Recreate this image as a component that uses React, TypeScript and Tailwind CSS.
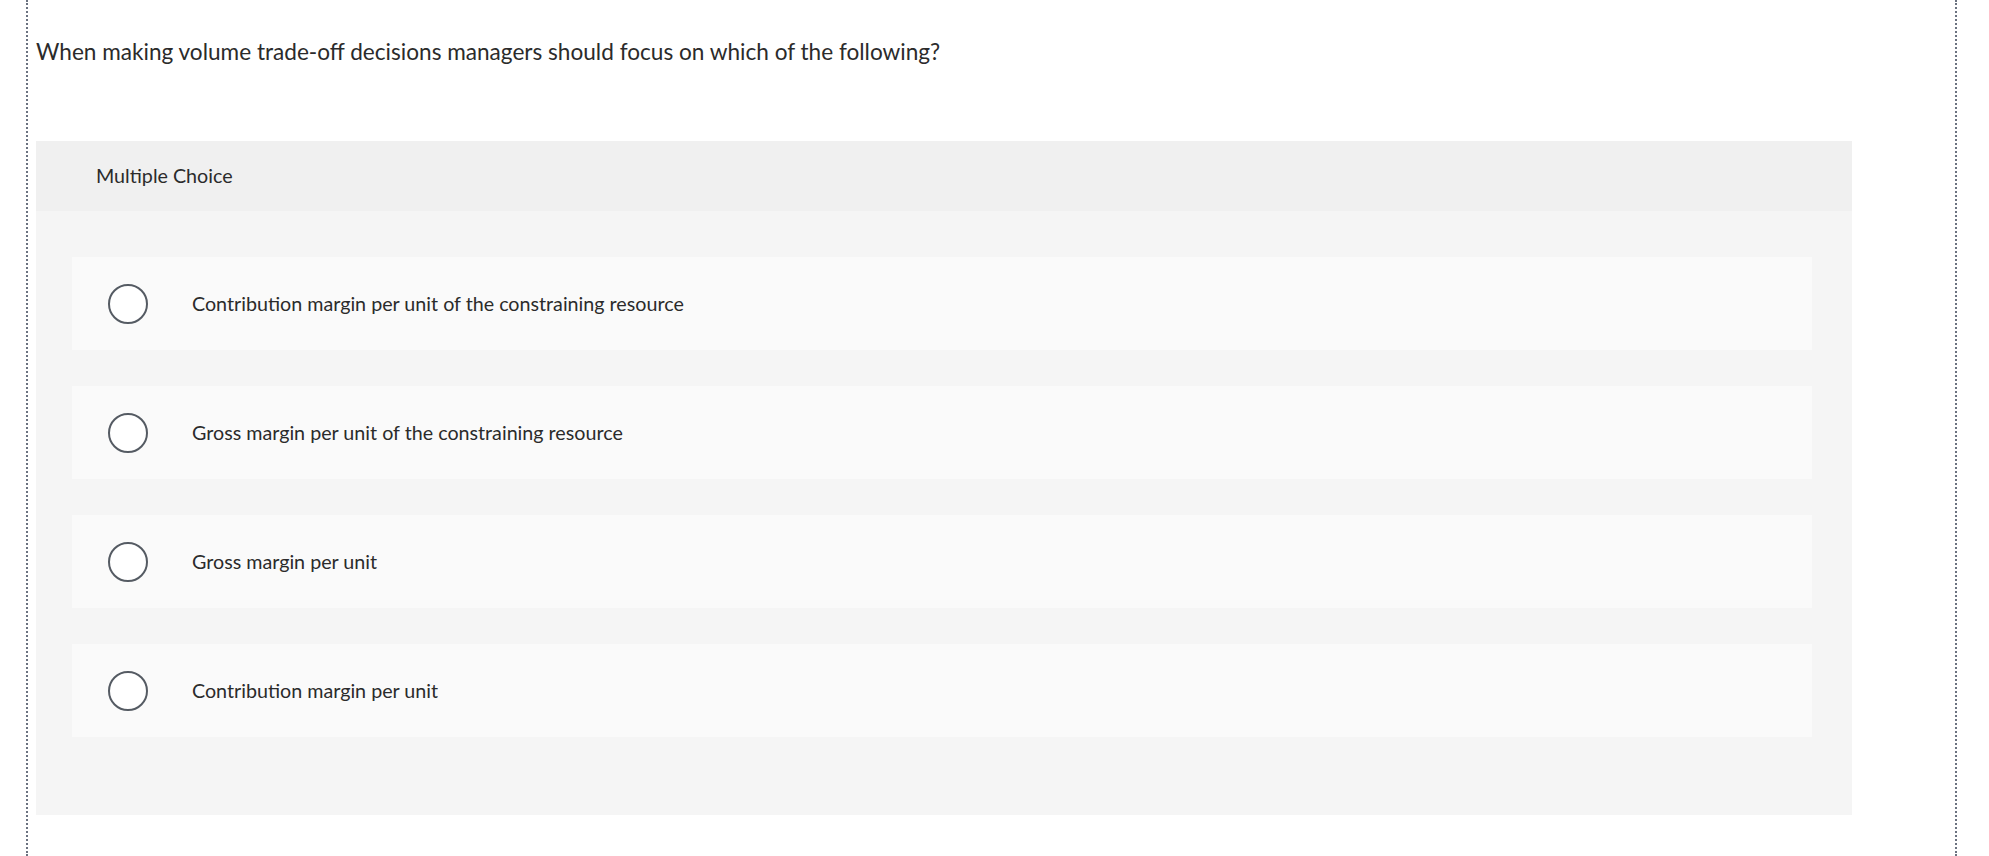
const options = [
  "Contribution margin per unit of the constraining resource",
  "Gross margin per unit of the constraining resource",
  "Gross margin per unit",
  "Contribution margin per unit",
];

function App() {
  return (
    <div className="w-full h-[856px] bg-white overflow-hidden" style={{ fontFamily: "Lato, 'Open Sans', sans-serif" }}>
      <div className="ml-[26px] w-[1931px] h-[856px] border-x-2 border-dotted border-[#6b7280] pl-2">
        <p className="pt-[38px] text-[22.6px] leading-[28px] text-[#2b2b2b]">
          When making volume trade-off decisions managers should focus on which of the following?
        </p>
        <div className="mt-[75px] w-[1816px] bg-[#f5f5f5]">
          <div className="h-[70px] bg-[#f0f0f0] pl-[60px] flex items-center text-[19.7px] text-[#2b2b2b]">
            Multiple Choice
          </div>
          <div className="pt-[46px] pb-[78px] pl-9 pr-10 flex flex-col gap-[36px]">
            {options.map((item) => (
              <div key={item} className="h-[93px] bg-[#fafafa] flex items-center pl-9 gap-11">
                <div className="w-10 h-10 rounded-full border-2 border-[#555b63] bg-white"></div>
                <p className="text-[19.7px] text-[#2b2b2b]">{item}</p>
              </div>
            ))}
          </div>
        </div>
      </div>
    </div>
  );
}

export default App;
